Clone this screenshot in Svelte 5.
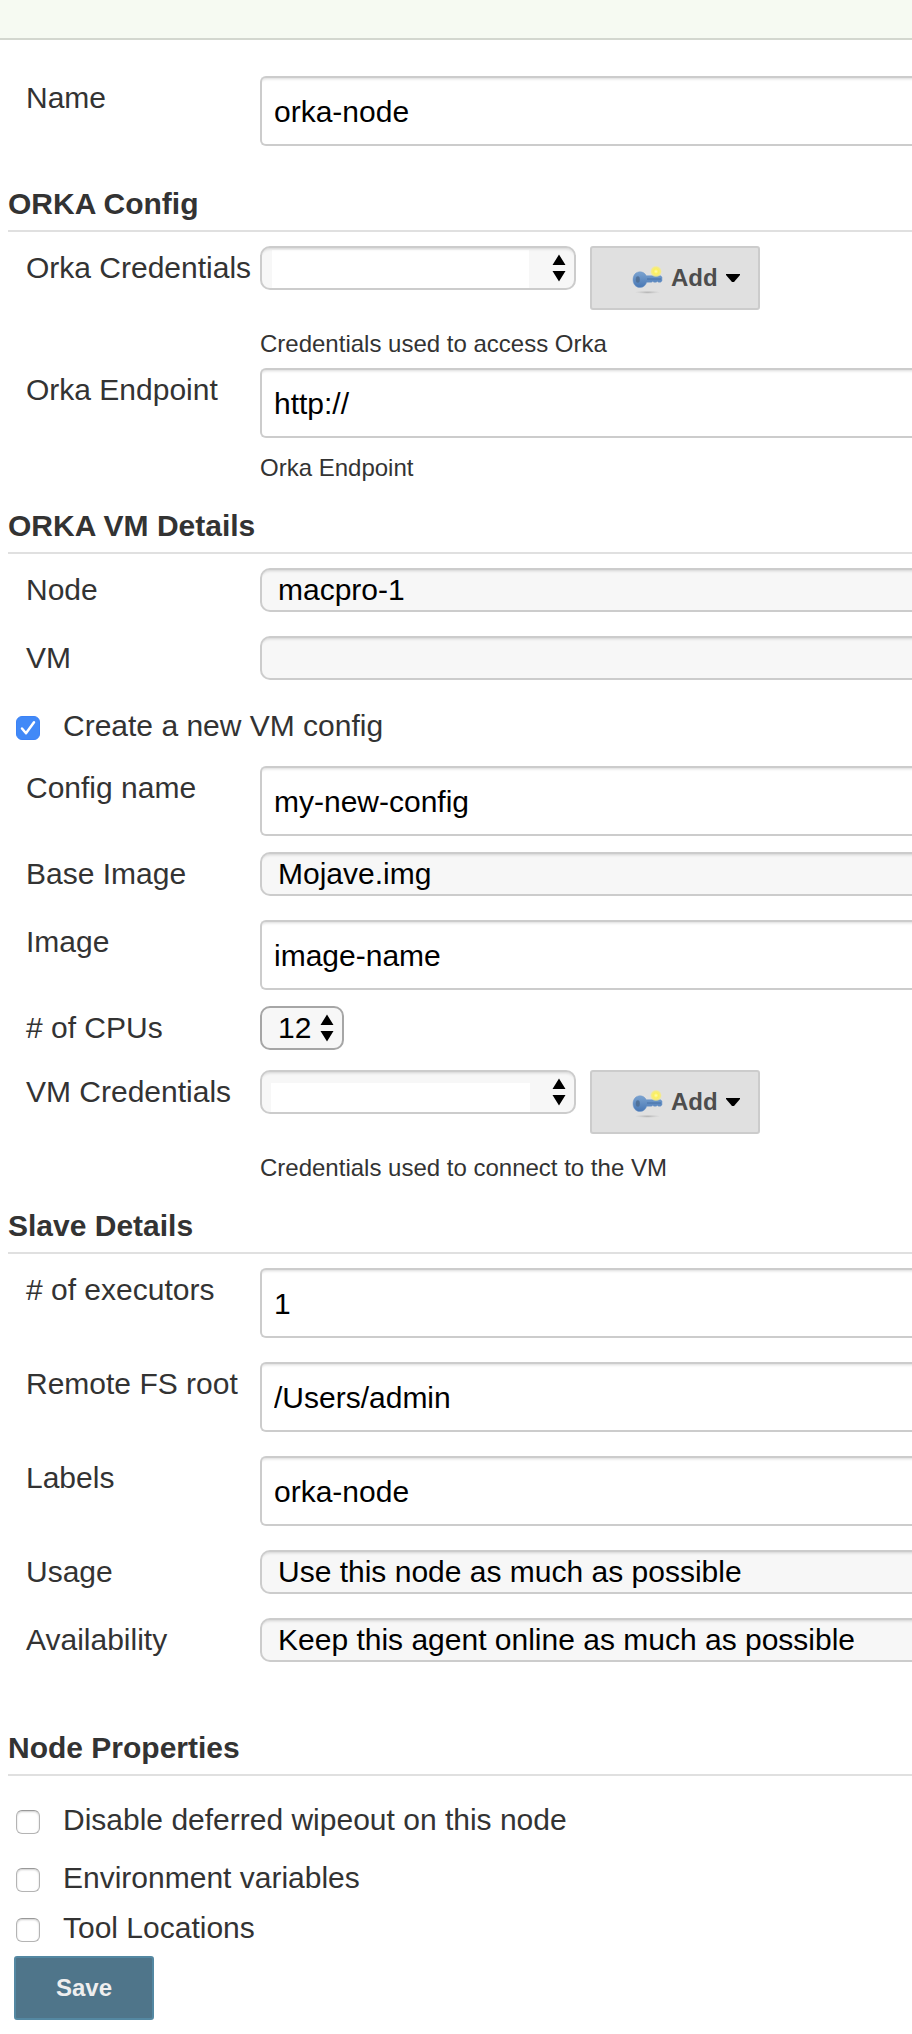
<script>
  let name = $state('orka-node');
  let endpoint = $state('http://');
  let configName = $state('my-new-config');
  let image = $state('image-name');
  let executors = $state('1');
  let remoteRoot = $state('/Users/admin');
  let labels = $state('orka-node');
  let createConfig = $state(true);
  let properties = $state([
    { id: 'wipeout', text: 'Disable deferred wipeout on this node', on: false, space: 'roomy' },
    { id: 'env', text: 'Environment variables', on: false, space: 'snug' },
    { id: 'tools', text: 'Tool Locations', on: false, space: 'last' }
  ]);
</script>

{#snippet arrows()}
  <svg class="arrows" viewBox="0 0 14 28" aria-hidden="true">
    <path d="M7 0.5 13.5 11H0.5ZM0.5 17h13L7 27.5Z" />
  </svg>
{/snippet}

{#snippet addButton()}
  <button type="button" class="add">
    <svg class="key" viewBox="0 0 32 32" aria-hidden="true">
      <defs>
        <linearGradient id="keyBlue" x1="0" y1="0" x2="0" y2="1">
          <stop offset="0" stop-color="#7ba3d0" />
          <stop offset="1" stop-color="#4877b4" />
        </linearGradient>
        <radialGradient id="glow">
          <stop offset="0" stop-color="#fffbb0" />
          <stop offset="0.4" stop-color="#fbf05c" />
          <stop offset="0.75" stop-color="#f7ec78" stop-opacity="0.85" />
          <stop offset="1" stop-color="#f4ec9a" stop-opacity="0" />
        </radialGradient>
        <radialGradient id="shade">
          <stop offset="0" stop-color="#8c8c8c" stop-opacity="0.55" />
          <stop offset="1" stop-color="#b0b0b0" stop-opacity="0" />
        </radialGradient>
      </defs>
      <ellipse cx="15.500" cy="30.300" rx="13" ry="1.700" fill="url(#shade)" />
      <path
        d="M8 9.800c2.800 0 5 1.500 6.300 3.900H28.500l1.500 1.300v4l-1.500 1.200h-2l-1-0.700-1.500 0.700h-2l-1.200-0.700-1.300 0.700h-4.700c-1.300 3.300-3.500 5.300-6.800 5.300-4.300 0-7-3.500-7-7.800S3.700 9.800 8 9.800Z"
        fill="url(#keyBlue)" stroke="#7099cb" stroke-width="0.500" />
      <ellipse cx="5.800" cy="17.500" rx="2" ry="3.200" fill="#4c6a8e" opacity="0.800" />
      <path d="M15 17h14" stroke="#4670a6" stroke-width="1" />
      <circle cx="24" cy="9.500" r="6" fill="url(#glow)" />
    </svg>
    <span>Add</span>
    <svg class="caret" viewBox="0 0 14 8" aria-hidden="true"><path d="M0 0h14v1L8 8H6L0 1Z" /></svg>
  </button>
{/snippet}

{#snippet tick()}
  <svg class="tick" viewBox="0 0 24 24" aria-hidden="true">
    <path d="M6 12.500 10 17.200 18 6.300" />
  </svg>
{/snippet}

<header class="topbar"></header>

<form class="page" onsubmit={(e) => e.preventDefault()}>
  <div class="row intro">
    <label for="name">Name</label>
    <input id="name" type="text" bind:value={name} />
  </div>

  <section>
    <h2>ORKA Config</h2>
    <div class="row help-row">
      <label for="orka-cred">Orka Credentials</label>
      <div class="field">
        <div class="line">
          <span class="picker cred"><select id="orka-cred" class="tall"><option></option></select>{@render arrows()}</span>
          {@render addButton()}
        </div>
        <p class="after-button">Credentials used to access Orka</p>
      </div>
    </div>
    <div class="row">
      <label for="endpoint">Orka Endpoint</label>
      <div class="field">
        <input id="endpoint" type="text" bind:value={endpoint} />
        <p>Orka Endpoint</p>
      </div>
    </div>
  </section>

  <section>
    <h2>ORKA VM Details</h2>
    <div class="row wide-gap">
      <label for="node">Node</label>
      <select id="node"><option>macpro-1</option></select>
    </div>
    <div class="row wide-gap">
      <label for="vm">VM</label>
      <select id="vm"><option></option></select>
    </div>
    <div class="check create">
      <span class="box"><input id="create" type="checkbox" bind:checked={createConfig} />{@render tick()}</span>
      <label for="create">Create a new VM config</label>
    </div>
    <div class="row small-gap">
      <label for="config">Config name</label>
      <input id="config" type="text" bind:value={configName} />
    </div>
    <div class="row wide-gap">
      <label for="base">Base Image</label>
      <select id="base"><option>Mojave.img</option></select>
    </div>
    <div class="row small-gap">
      <label for="image">Image</label>
      <input id="image" type="text" bind:value={image} />
    </div>
    <div class="row mid-gap">
      <label for="cpus"># of CPUs</label>
      <div class="line">
        <span class="picker cpus"><select id="cpus"><option>12</option></select>{@render arrows()}</span>
      </div>
    </div>
    <div class="row">
      <label for="vm-cred">VM Credentials</label>
      <div class="field">
        <div class="line">
          <span class="picker cred"><select id="vm-cred" class="short"><option></option></select>{@render arrows()}</span>
          {@render addButton()}
        </div>
        <p class="after-button">Credentials used to connect to the VM</p>
      </div>
    </div>
  </section>

  <section class="slave">
    <h2>Slave Details</h2>
    <div class="row wide-gap">
      <label for="executors"># of executors</label>
      <input id="executors" type="text" bind:value={executors} />
    </div>
    <div class="row wide-gap">
      <label for="root">Remote FS root</label>
      <input id="root" type="text" bind:value={remoteRoot} />
    </div>
    <div class="row wide-gap">
      <label for="labels">Labels</label>
      <input id="labels" type="text" bind:value={labels} />
    </div>
    <div class="row wide-gap">
      <label for="usage">Usage</label>
      <select id="usage"><option>Use this node as much as possible</option></select>
    </div>
    <div class="row">
      <label for="availability">Availability</label>
      <select id="availability"><option>Keep this agent online as much as possible</option></select>
    </div>
  </section>

  <section class="properties">
    <h2>Node Properties</h2>
    {#each properties as p (p.id)}
      <div class="check {p.space}">
        <span class="box"><input id={p.id} type="checkbox" bind:checked={p.on} />{@render tick()}</span>
        <label for={p.id}>{p.text}</label>
      </div>
    {/each}
  </section>

  <button type="submit" class="save">Save</button>
</form>

<style>
  :global(body) {
    margin: 0;
    background: #fff;
    color: #333;
    font: 30px/36px 'Liberation Sans', Arial, Helvetica, sans-serif;
  }

  .topbar {
    height: 38px;
    background: #f6faf2;
    border-bottom: 2px solid #d3d7cf;
  }

  .page {
    padding: 36px 0 14px 8px;
  }

  section {
    margin-bottom: 26px;
  }
  .slave {
    margin-bottom: 68px;
  }
  .properties {
    margin-bottom: 10px;
  }

  h2 {
    margin: 0 0 14px;
    padding-bottom: 8px;
    border-bottom: 2px solid #e0e0e0;
    font-size: 30px;
    line-height: 36px;
    font-weight: bold;
  }
  .properties h2 {
    margin-bottom: 26px;
  }

  .row {
    display: grid;
    grid-template-columns: 252px minmax(0, 1fr);
    align-items: start;
  }
  .row > label {
    padding: 4px 0 0 18px;
    white-space: nowrap;
  }
  .intro {
    margin-bottom: 40px;
  }
  .help-row {
    margin-bottom: 10px;
  }
  .small-gap {
    margin-bottom: 16px;
  }
  .mid-gap {
    margin-bottom: 20px;
  }
  .wide-gap {
    margin-bottom: 24px;
  }

  input[type='text'],
  select {
    box-sizing: border-box;
    display: block;
    width: 100%;
    margin: 0;
    border: 2px solid #ccc;
    border-right: 0;
    color: #000;
    font: inherit;
    box-shadow: inset 0 4px 3px -3px rgba(0, 0, 0, 0.15);
    outline: 0;
  }
  input[type='text'] {
    height: 70px;
    padding: 2px 12px 0;
    border-radius: 6px 0 0 6px;
    background: #fff;
  }
  select {
    appearance: none;
    height: 44px;
    padding: 0 16px;
    border-radius: 10px 0 0 10px;
    background: #f7f7f7;
  }

  .line {
    display: flex;
    align-items: flex-start;
    gap: 14px;
  }
  .picker {
    position: relative;
  }
  .picker select {
    border-right: 2px solid #ccc;
    border-radius: 10px;
  }
  .cred {
    width: 316px;
  }
  .cpus {
    width: 84px;
  }
  .cpus select {
    padding-right: 0;
    border-color: #a6a6a6;
    box-shadow: none;
  }
  .tall {
    background: linear-gradient(#fff, #fff) 10px 2px / 257px 38px no-repeat #f7f7f7;
  }
  .short {
    background: linear-gradient(#fff, #fff) 9px 11px / 259px 29px no-repeat #f7f7f7;
  }
  .arrows {
    position: absolute;
    top: 8px;
    right: 10px;
    width: 14px;
    height: 28px;
    pointer-events: none;
  }

  p {
    margin: 16px 0 0;
    font-size: 24px;
    line-height: 28px;
  }
  .after-button {
    margin-top: 20px;
  }

  button {
    box-sizing: border-box;
    height: 64px;
    border-radius: 3px;
    font: bold 24px/28px 'Liberation Sans', Arial, Helvetica, sans-serif;
  }
  .add {
    display: flex;
    align-items: center;
    padding: 0 18px 0 40px;
    border: 2px solid #ccc;
    background: #e0e0e0;
    color: #4d4d4d;
  }
  .key {
    width: 32px;
    height: 32px;
    margin-right: 7px;
  }
  .caret {
    width: 14px;
    height: 8px;
    margin-left: 8px;
  }

  .check {
    display: flex;
    gap: 23px;
    padding-left: 8px;
  }
  .create {
    margin: 28px 0 22px;
  }
  .roomy {
    margin-bottom: 22px;
  }
  .snug {
    margin-bottom: 14px;
  }
  .box {
    display: grid;
    width: 24px;
    height: 24px;
    margin-top: 8px;
  }
  .box > :global(*) {
    grid-area: 1 / 1;
  }
  .box input {
    appearance: none;
    box-sizing: border-box;
    width: 24px;
    height: 24px;
    margin: 0;
    border: 1px solid #b4b4b4;
    border-top-color: #999;
    border-radius: 6px;
    background: #fff;
    box-shadow: inset 0 1px 2px rgba(0, 0, 0, 0.2);
  }
  .box input:checked {
    border-color: #3b82f6;
    background: #4189f7;
    box-shadow: none;
  }
  .tick {
    width: 24px;
    height: 24px;
    fill: none;
    stroke: #fff;
    stroke-width: 2.5;
    stroke-linecap: round;
    stroke-linejoin: round;
    pointer-events: none;
    visibility: hidden;
  }
  .box input:checked + .tick {
    visibility: visible;
  }

  .save {
    display: block;
    width: 140px;
    margin-left: 6px;
    border: 2px solid #5488a2;
    background: #4f758a;
    color: #eee;
  }
</style>
